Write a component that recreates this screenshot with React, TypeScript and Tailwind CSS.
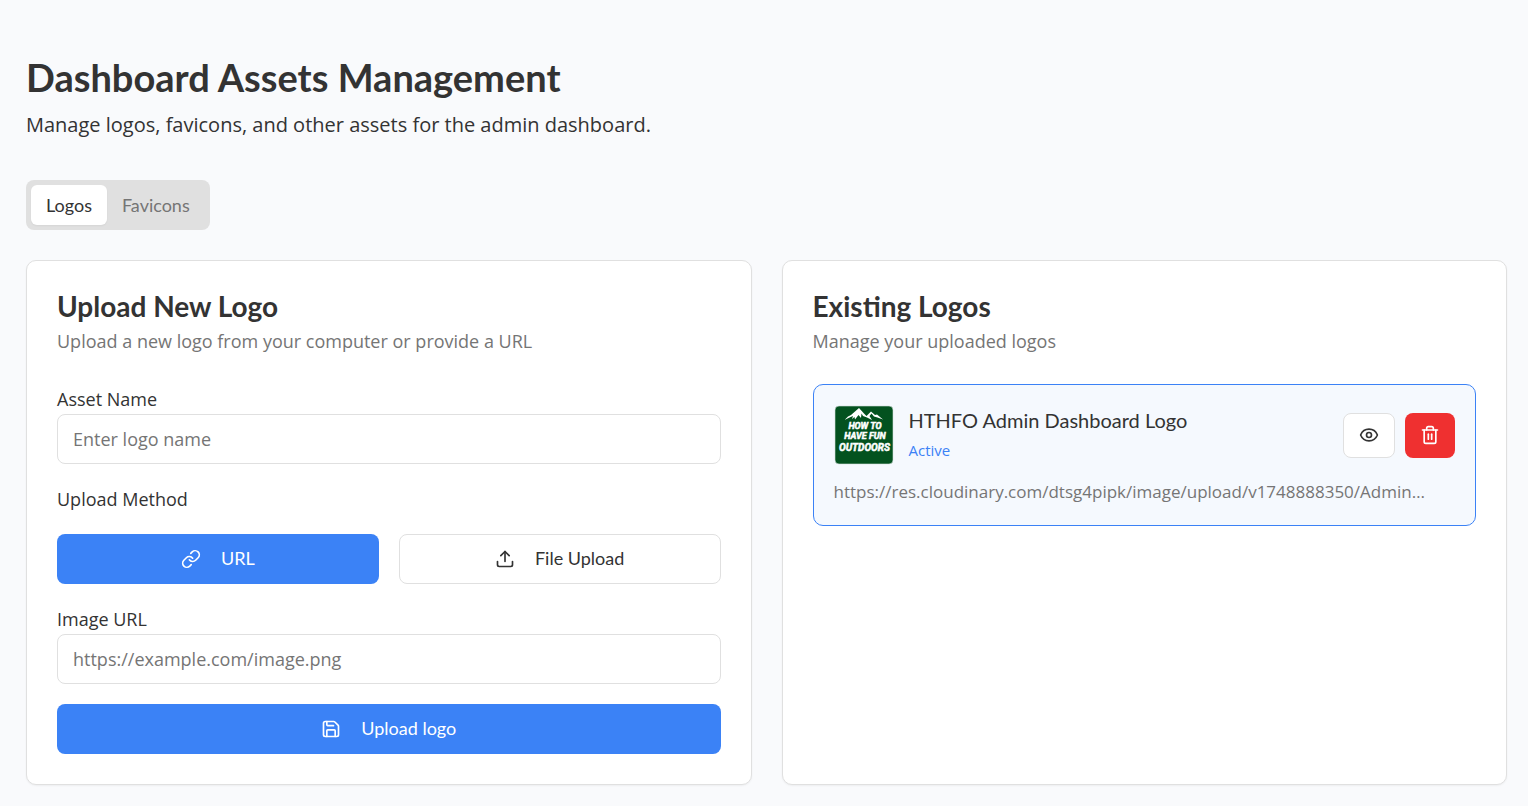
import { useState } from "react";
import { Eye, Link, Save, Trash2, Upload } from "lucide-react";

const heading = "font-['Lato',sans-serif]";
const card = "rounded-[10px] border border-[#e0e0e0] bg-white p-[30px] shadow-xs";
const field =
  "block h-[50px] w-full rounded-lg border border-[#e0e0e0] bg-white px-[15px] text-lg text-[#333] placeholder:text-[#757575]";
const button =
  "flex h-[50px] items-center justify-center gap-5 rounded-lg text-lg font-['Lato',sans-serif]";
const buttonLabel = "pb-0.5";
const primary = "bg-[#3b82f6] text-white";
const outline = "border border-[#e0e0e0] bg-white text-[#333]";

function LogoThumbnail() {
  return (
    <svg viewBox="0 0 60 60" className="size-[60px] shrink-0" role="img" aria-label="How to have fun outdoors">
      <rect x="1" y="1" width="58" height="58" rx="4" fill="#03521f" stroke="#d5dfdc" strokeWidth="0.6" />
      <path
        d="M10.5 15 L14 11.5 L17 10 L25 3 L30 8.5 L32.5 11 L37 6.5 L41 10 L43 9.5 L49 14.5 L43.5 12.5 L40 11.5 L37.5 8.5 L35.5 11 L38 15 L33 12.5 L29 11 L27.5 8.5 L27 13 L24.5 10 L21 14.5 L20.5 12 L18 14 L19 11 L15.5 12.5 Z"
        fill="#fff"
      />
      <g
        fill="#fff"
        stroke="#fff"
        strokeWidth="0.5"
        fontFamily="Roboto, sans-serif"
        fontStyle="italic"
        fontWeight="700"
        textAnchor="middle"
      >
        <text x="31" y="23.5" fontSize="9">HOW TO</text>
        <text x="31" y="34" fontSize="9">HAVE FUN</text>
        <text x="30.5" y="45.5" fontSize="10">OUTDOORS</text>
      </g>
    </svg>
  );
}

function UploadCard() {
  const [method, setMethod] = useState("url");
  return (
    <section className={card}>
      <h2 className={`${heading} text-[28px] leading-[30px] font-bold`}>Upload New Logo</h2>
      <p className="mt-2 text-lg leading-[25px] text-[#757575]">
        Upload a new logo from your computer or provide a URL
      </p>
      <form className="mt-[30px] flex flex-col gap-5" onSubmit={(e) => e.preventDefault()}>
        <div>
          <label htmlFor="asset-name" className="block text-lg leading-[30px] font-medium">
            Asset Name
          </label>
          <input id="asset-name" type="text" placeholder="Enter logo name" className={field} />
        </div>
        <fieldset>
          <legend className="text-lg leading-[30px] font-medium">Upload Method</legend>
          <div className="mt-5 grid grid-cols-2 gap-5">
            <button
              type="button"
              onClick={() => setMethod("url")}
              className={`${button} ${method === "url" ? primary : outline}`}
            >
              <Link size={20} />
              <span className={buttonLabel}>URL</span>
            </button>
            <button
              type="button"
              onClick={() => setMethod("file")}
              className={`${button} ${method === "file" ? primary : outline}`}
            >
              <Upload size={20} />
              <span className={buttonLabel}>File Upload</span>
            </button>
          </div>
        </fieldset>
        <div>
          <label htmlFor="image-url" className="block text-lg leading-[30px] font-medium">
            Image URL
          </label>
          <input id="image-url" type="url" placeholder="https://example.com/image.png" className={field} />
        </div>
        <button type="submit" className={`${button} ${primary}`}>
          <Save size={20} />
          <span className={buttonLabel}>Upload logo</span>
        </button>
      </form>
    </section>
  );
}

function ExistingCard() {
  return (
    <section className={`${card} min-w-0`}>
      <h2 className={`${heading} text-[28px] leading-[30px] font-bold`}>Existing Logos</h2>
      <p className="mt-2 text-lg leading-[25px] text-[#757575]">Manage your uploaded logos</p>
      <article className="mt-[30px] rounded-[10px] border border-[#3b82f6] bg-[#f5f9fe] p-5">
        <div className="flex items-center justify-between gap-4">
          <div className="flex min-w-0 items-center gap-[15px]">
            <LogoThumbnail />
            <div className="min-w-0">
              <h3 className={`${heading} truncate text-xl leading-[30px]`}>HTHFO Admin Dashboard Logo</h3>
              <p className="text-[15px] leading-[30px] text-[#3b82f6]">Active</p>
            </div>
          </div>
          <div className="flex shrink-0 gap-[10px]">
            <button
              type="button"
              aria-label="View logo"
              className="flex h-[45px] w-[52px] items-center justify-center rounded-lg border border-[#e0e0e0] bg-white"
            >
              <Eye size={20} />
            </button>
            <button
              type="button"
              aria-label="Delete logo"
              className="flex h-[45px] w-[50px] items-center justify-center rounded-lg bg-[#ef3030] text-white"
            >
              <Trash2 size={20} />
            </button>
          </div>
        </div>
        <p className="mt-[14px] truncate text-[17px] leading-[26px] text-[#757575]">
          https://res.cloudinary.com/dtsg4pipk/image/upload/v1748888350/Admin…
        </p>
      </article>
    </section>
  );
}

export default function App() {
  const [tab, setTab] = useState("Logos");
  return (
    <main className="min-h-screen bg-[#f9fafc] pt-[52px] pr-[21px] pb-[21px] pl-[26px] font-['Open_Sans',sans-serif] text-[#333]">
      <header>
        <h1 className={`${heading} text-[38px] leading-[50px] font-bold`}>Dashboard Assets Management</h1>
        <p className="mt-2 text-xl leading-[30px]">
          Manage logos, favicons, and other assets for the admin dashboard.
        </p>
      </header>
      <div role="tablist" className="mt-10 inline-flex h-[50px] rounded-lg bg-[#e0e0e0] p-[5px]">
        {["Logos", "Favicons"].map((name) => (
          <button
            key={name}
            type="button"
            role="tab"
            aria-selected={tab === name}
            onClick={() => setTab(name)}
            className={`${heading} rounded-md px-[15px] text-lg ${
              tab === name ? "bg-white text-[#333] shadow-xs" : "text-[#757575]"
            }`}
          >
            {name}
          </button>
        ))}
      </div>
      <div className="mt-[30px] grid grid-cols-1 gap-[30px] lg:grid-cols-2">
        <UploadCard />
        <ExistingCard />
      </div>
    </main>
  );
}
